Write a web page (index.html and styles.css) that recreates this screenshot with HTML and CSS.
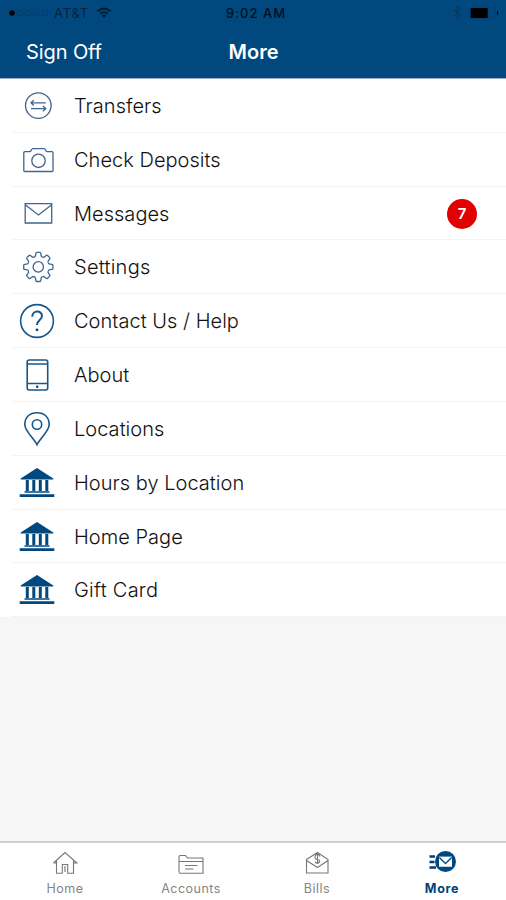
FILE: index.html
```html
<!DOCTYPE html>
<html lang="en">
<head>
<meta charset="utf-8">
<meta name="viewport" content="width=device-width, initial-scale=1">
<title>More</title>
<link rel="stylesheet" href="styles.css">
</head>
<body>
<svg class="defs" aria-hidden="true">
  <defs>
    <path id="tooth" d="M-4.2-10.1Q-2.9-10-2.7-11.8L-2.5-13.6Q-2.4-14.6-1.5-14.6H1.5Q2.4-14.6 2.5-13.6L2.7-11.8Q2.9-10 4.2-10.1"/>
    <g id="bank" stroke="none">
      <path d="M0-14.9L16.3-4.6V-3.6H-16.3V-4.6Z"/>
      <path d="M-11.2-3h3V8h-3zM-4.7-3h3V8h-3zM1.8-3h3V8h-3zM8.3-3h3V8h-3z"/>
      <path d="M-12.5 8.2h25v1.5h-25zM-17.3 11.2h34.6v2.7h-34.6z"/>
    </g>
  </defs>
</svg>
<div class="screen">
  <header class="header">
    <div class="status">
      <div class="carrier">
        <svg width="42" height="10" viewBox="0 0 42 10"><circle cx="4" cy="5" r="2.8"/><g fill="none" stroke="#073c68" stroke-width=".8"><circle cx="12" cy="5" r="2.8"/><circle cx="20" cy="5" r="2.8"/><circle cx="28.5" cy="5" r="2.8"/><circle cx="37" cy="5" r="2.8"/></g></svg>
        <span class="network">AT&amp;T</span>
        <svg class="wifi" width="16" height="12" viewBox="0 0 16 12" fill="none" stroke="#05192b" stroke-width="1.8"><path d="M1.5 4.2Q8-1.2 14.5 4.2M4 6.8Q8 3.5 12 6.8"/><path d="M5.8 8.3Q8 6.8 10.2 8.3L8 11Z" fill="#05192b" stroke="none"/></svg>
      </div>
      <span class="time">9:02 AM</span>
      <div class="power">
        <svg width="10" height="16" viewBox="0 0 10 16" fill="none" stroke="#0b3558"><path d="M1 4.5L9 11L5 15V1L9 5L1 11.5"/></svg>
        <svg width="31" height="12" viewBox="0 0 31 12"><rect x=".5" y=".5" width="26" height="11" rx="1.5" fill="none" stroke="#083f6c" stroke-width=".7"/><rect x="1.7" y="1" width="17" height="10"/><path d="M28 3.5q2.5 2.5 0 5z"/></svg>
      </div>
    </div>
    <div class="navbar"><span class="signoff">Sign Off</span><h1 class="title">More</h1></div>
  </header>
  <main class="content">
    <ul class="menu">
      <li class="row"><svg class="icon light" viewBox="-20 -20 40 40"><circle cx="1.3" cy="-.4" r="12.8"/><path d="M-5.5-3.2H8.8M-3.2-5.8L-6-3.2L-3.2-.6M-6 2.6H8.5M5.9 0L8.8 2.6L5.9 5.2"/></svg><span class="label">Transfers</span></li>
      <li class="row"><svg class="icon light" viewBox="-20 -20 40 40"><path d="M-12.2-8.3H-7.5Q-6.4-8.3-6-9.5T-4.5-11.3H7.2Q8.2-11.3 8.6-9.8T10.2-8.3H15Q16-8.3 16-7.3V10.5Q16 11.5 15 11.5H-12.2Q-13.2 11.5-13.2 10.5V-7.3Q-13.2-8.3-12.2-8.3Z"/><circle cx="1.5" cy=".8" r="6.7"/></svg><span class="label">Check Deposits</span></li>
      <li class="row"><svg class="icon light" viewBox="-20 -20 40 40"><path d="M-11.8-10.3H14.7V9H-11.8ZM-11.8-9.3L1.5 1L14.7-9.3"/></svg><span class="label">Messages</span><span class="badge">7</span></li>
      <li class="row"><svg class="icon light" viewBox="-20 -20 40 40"><g transform="translate(1.3 -.1)"><use href="#tooth"/><use href="#tooth" transform="rotate(45)"/><use href="#tooth" transform="rotate(90)"/><use href="#tooth" transform="rotate(135)"/><use href="#tooth" transform="rotate(180)"/><use href="#tooth" transform="rotate(225)"/><use href="#tooth" transform="rotate(270)"/><use href="#tooth" transform="rotate(315)"/><circle r="5.2"/></g></svg><span class="label wide">Settings</span></li>
      <li class="row"><svg class="icon bold" viewBox="-20 -20 40 40"><circle cy="0" r="16.4"/><path d="M-4.8-4.2C-4.8-11 5-11 5-5C5-1-.2-1 0 4" stroke-width="2"/><circle cy="8.8" r="1.4" fill="#00487d" stroke="none"/></svg><span class="label">Contact Us / Help</span></li>
      <li class="row"><svg class="icon bold" viewBox="-20 -20 40 40"><rect x="-9.8" y="-15" width="20.5" height="30" rx="2"/><path d="M-10-11H10.5M-10 8.5H10.5"/><circle cx=".2" cy="11.7" r="1.3" fill="#00487d" stroke="none"/></svg><span class="label">About</span></li>
      <li class="row"><svg class="icon bold" viewBox="-20 -20 40 40"><path d="M0 15.7C-3.5 9-12.2 2-12.2-4.5C-12.2-12-7-16.3 0-16.3S12.2-12 12.2-4.5C12.2 2 3.5 9 0 15.7Z"/><circle cy="-4.5" r="4.7"/></svg><span class="label">Locations</span></li>
      <li class="row"><svg class="icon solid" viewBox="-20 -20 40 40"><use href="#bank"/></svg><span class="label">Hours by Location</span></li>
      <li class="row"><svg class="icon solid" viewBox="-20 -20 40 40"><use href="#bank"/></svg><span class="label">Home Page</span></li>
      <li class="row"><svg class="icon solid" viewBox="-20 -20 40 40"><use href="#bank"/></svg><span class="label wide">Gift Card</span></li>
    </ul>
  </main>
  <nav class="tabs">
    <div class="tab"><svg class="tab-icon" viewBox="0 0 30 26"><path d="M3.5 13L15 2.5L26.8 13H24M3.5 13H6.5M6.5 11V23.3H12.3V14.5H17.7V23.3H23.5V11M15 16V22"/></svg><span>Home</span></div>
    <div class="tab"><svg class="tab-icon" viewBox="0 0 30 26"><path d="M3 21.5V6.5Q3 5.5 4 5.5H9.5L11.5 8H27V23.3H4.5Q3 23.3 3 21.5ZM3 11.5H27M9 15.5H21.5M9 19H17.5"/></svg><span>Accounts</span></div>
    <div class="tab"><svg class="tab-icon" viewBox="0 0 30 26"><path d="M4.5 9.5L15.5 2.5L26 9.5V23H4.5ZM4.5 10.5L15.5 17.5L26 10.5M18 6.5C15-.0 10 9 15.3 9.5C20 10 17 15 12.8 12M15.5 4.5V14"/></svg><span>Bills</span></div>
    <div class="tab active"><svg class="tab-icon" viewBox="0 0 30 26"><circle cx="18.5" cy="11.5" r="10.5" fill="#00487d" stroke="none"/><path d="M12 6.8H25V16.5H12ZM12 7.5L18.5 13.5L25 7.5" fill="#fff" stroke="none"/><path d="M12 6.8H25V16.5H12Z" fill="#fff" stroke="none"/><path d="M12.3 7.5L18.5 13.5L24.7 7.5" stroke="#00487d" stroke-width="1.3"/><path d="M2.5 6.5H8M2.5 12H7.5M2.5 17.5H9" stroke="#003b78" stroke-width="2.6"/></svg><span>More</span></div>
  </nav>
</div>
</body>
</html>
```

FILE: styles.css
```css
* { box-sizing: border-box; }
body { margin: 0; font-family: Inter, "Liberation Sans", sans-serif; }
.defs { position: absolute; width: 0; height: 0; }
.screen { display: flex; flex-direction: column; width: 506px; height: 900px; background: #f6f6f6; }

.header { height: 79px; background: #00487d; border-bottom: 1px solid #9aadc6; }
.status { display: grid; grid-template-columns: 1fr auto 1fr; align-items: center; height: 26px; padding: 0 6px 0 8px; color: #00101f; }
.carrier { display: flex; align-items: center; }
.network { margin-left: 4px; font-size: 13px; letter-spacing: .8px; color: #052340; }
.wifi { margin-left: 7px; }
.time { margin-left: 4px; font-size: 13px; font-weight: 500; letter-spacing: 1px; }
.power { display: flex; align-items: center; justify-content: flex-end; gap: 7px; }
.navbar { display: grid; grid-template-columns: 1fr auto 1fr; align-items: center; height: 52px; padding: 0 25px 0 26px; color: #fff; }
.signoff { font-size: 20px; letter-spacing: -.1px; }
.title { margin: 0; font-size: 20px; font-weight: 600; }

.content { flex: 1; }
.menu { margin: 0; padding: 0; list-style: none; background: #fff; }
.row { display: flex; align-items: center; height: 53.83px; padding: 0 29px 0 17px;
  background: linear-gradient(#f3f3f3, #f3f3f3) 12px 100% / 100% 1px no-repeat; }
.icon { flex: none; width: 40px; height: 40px; fill: none; stroke: #41658f; stroke-width: 1.3; }
.icon.bold { stroke: #17568a; stroke-width: 1.6; }
.icon.solid { fill: #00487d; }
.label { margin-left: 17px; font-size: 20px; font-weight: 300; color: #111; white-space: nowrap; letter-spacing: .03px; }
.label.wide { letter-spacing: .25px; }
.badge { display: flex; align-items: center; justify-content: center; width: 30px; height: 30px; margin-left: auto; border-radius: 50%; background: #e30000; color: #fff; font-size: 15px; font-weight: 600; }

.tabs { display: grid; grid-template-columns: repeat(4, 1fr); height: 59px; border-top: 2px solid #cfcfcf; background: #fff; padding: 0 0 0 2px; }
.tab { display: flex; flex-direction: column; align-items: center; padding-top: 7px; font-size: 12.5px; line-height: 16px; letter-spacing: .5px; color: #858585; }
.tab-icon { width: 30px; height: 26px; margin-bottom: 5px; fill: none; stroke: #777; stroke-width: 1.1; }
.tab.active { padding-right: 2px; color: #00417b; font-weight: 700; letter-spacing: .7px; }
```
